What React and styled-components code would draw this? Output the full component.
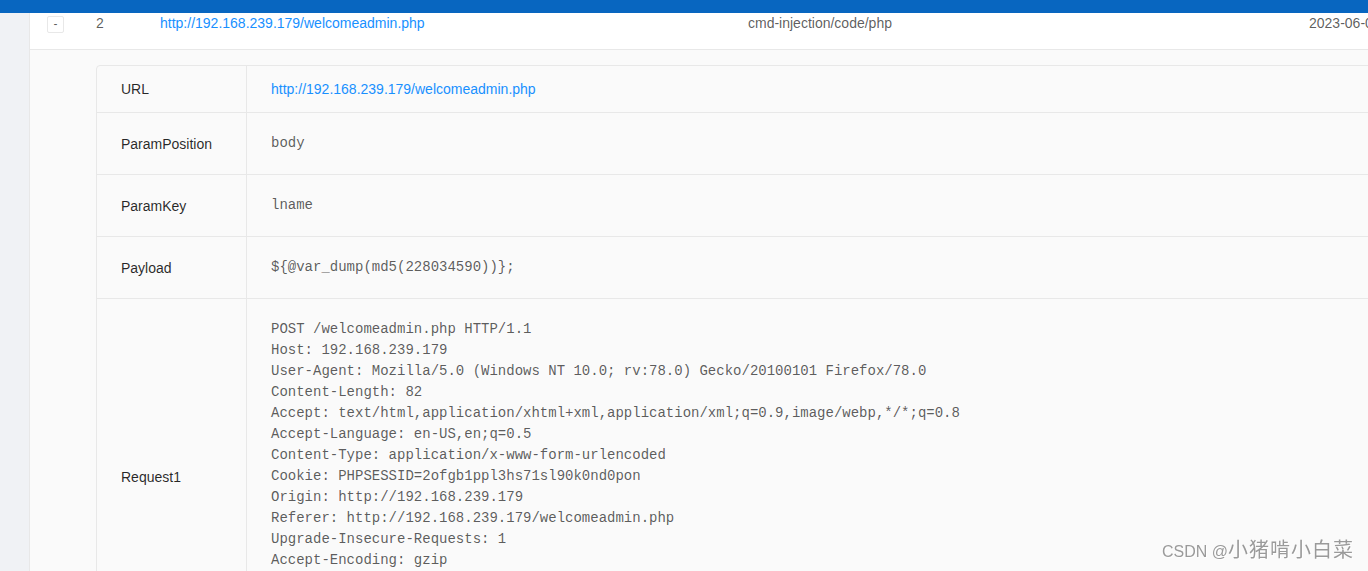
import React from "react";
import styled, {createGlobalStyle} from "styled-components";

const GlobalStyle = createGlobalStyle`
  html, body {
    margin: 0;
    padding: 0;
    overflow: hidden;
    background: #f0f2f5;
    font-family: "Liberation Sans", Arial, sans-serif;
    font-size: 14px;
  }
`;

const TopBar = styled.div`
  position: fixed;
  top: 0;
  left: 0;
  right: 0;
  height: 13px;
  background: #0866c0;
  z-index: 10;
`;

const Page = styled.div`
  margin-top: -4px;
  padding-left: 29px;
  width: 1500px;
`;

const Card = styled.div`
  background: #fff;
  border-left: 1px solid #e8e8e8;
`;

const Row = styled.div`
  display: grid;
  grid-template-columns: 66px 64px 588px 561px 1fr;
  align-items: center;
  padding: 16px 0 15px;
  border-bottom: 1px solid #e8e8e8;
  line-height: 22px;
  color: rgba(0, 0, 0, 0.65);
`;

const ExpandButton = styled.button`
  margin-left: 17px;
  width: 17px;
  height: 17px;
  padding: 0;
  border: 1px solid #e8e8e8;
  border-radius: 2px;
  background: #fff;
  color: rgba(0, 0, 0, 0.65);
  font-family: "Liberation Sans", Arial, sans-serif;
  font-size: 12px;
  line-height: 14px;
  cursor: pointer;
`;

const Link = styled.a`
  color: #1890ff;
  text-decoration: none;
`;

const Expanded = styled.div`
  background: #fafafa;
  padding: 15px 0 40px 66px;
`;

const Table = styled.div`
  width: 1400px;
  border: 1px solid #e8e8e8;
  border-radius: 4px;
  background: #fafafa;
`;

const TableRow = styled.div`
  display: grid;
  grid-template-columns: 150px 1fr;
  & + & {
    border-top: 1px solid #e8e8e8;
  }
`;

const Label = styled.div`
  display: flex;
  align-items: center;
  padding: 12px 24px;
  border-right: 1px solid #e8e8e8;
  color: rgba(0, 0, 0, 0.85);
  line-height: 22px;
`;

const Value = styled.div`
  padding: 12px 24px;
  line-height: 22px;
`;

const Code = styled.pre`
  margin: 8px 0;
  font-family: "Liberation Mono", "Courier New", monospace;
  font-size: 14px;
  line-height: 21px;
  color: rgba(0, 0, 0, 0.65);
  white-space: pre;
`;

// CSDN watermark over the bottom-right corner
const Watermark = styled.div`
  position: fixed;
  right: 14px;
  bottom: 9px;
  line-height: 20px;
  color: #9a9a9a;
  text-shadow: 1px 1px 0 rgba(255, 255, 255, 0.8);
  white-space: nowrap;
  z-index: 10;
`;

const MarkLatin = styled.span`
  font-family: "Liberation Sans", Arial, sans-serif;
  font-size: 16px;
`;

const MarkCjk = styled.span`
  font-family: "Noto Sans CJK SC", sans-serif;
  font-size: 20px;
  letter-spacing: 1px;
`;

const url = "http://192.168.239.179/welcomeadmin.php";

const request = [
  "POST /welcomeadmin.php HTTP/1.1",
  "Host: 192.168.239.179",
  "User-Agent: Mozilla/5.0 (Windows NT 10.0; rv:78.0) Gecko/20100101 Firefox/78.0",
  "Content-Length: 82",
  "Accept: text/html,application/xhtml+xml,application/xml;q=0.9,image/webp,*/*;q=0.8",
  "Accept-Language: en-US,en;q=0.5",
  "Content-Type: application/x-www-form-urlencoded",
  "Cookie: PHPSESSID=2ofgb1ppl3hs71sl90k0nd0pon",
  "Origin: http://192.168.239.179",
  "Referer: http://192.168.239.179/welcomeadmin.php",
  "Upgrade-Insecure-Requests: 1",
  "Accept-Encoding: gzip",
  "Connection: close",
  "",
  "fname=&lname=%24%7B%40var_dump%28md5%28228034590%29%29%7D%3B",
].join("\n");

const details = [
  {label: "URL", value: <Link href="#">{url}</Link>},
  {label: "ParamPosition", value: <Code>body</Code>},
  {label: "ParamKey", value: <Code>lname</Code>},
  {label: "Payload", value: <Code>{"${@var_dump(md5(228034590))};"}</Code>},
  {label: "Request1", value: <Code>{request}</Code>},
];

export default function App() {
  return (
    <>
      <GlobalStyle />
      <TopBar />
      <Page>
        <Card>
          <Row>
            <div>
              <ExpandButton type={"button"}>-</ExpandButton>
            </div>
            <div>2</div>
            <div>
              <Link href="#">{url}</Link>
            </div>
            <div>cmd-injection/code/php</div>
            <div>2023-06-02 10:21:43</div>
          </Row>
          <Expanded>
            <Table>
              {details.map((d) => (
                <TableRow key={d.label}>
                  <Label>{d.label}</Label>
                  <Value>{d.value}</Value>
                </TableRow>
              ))}
            </Table>
          </Expanded>
        </Card>
      </Page>
      <Watermark>
        <MarkLatin>CSDN @</MarkLatin>
        <MarkCjk>小猪啃小白菜</MarkCjk>
      </Watermark>
    </>
  );
}
